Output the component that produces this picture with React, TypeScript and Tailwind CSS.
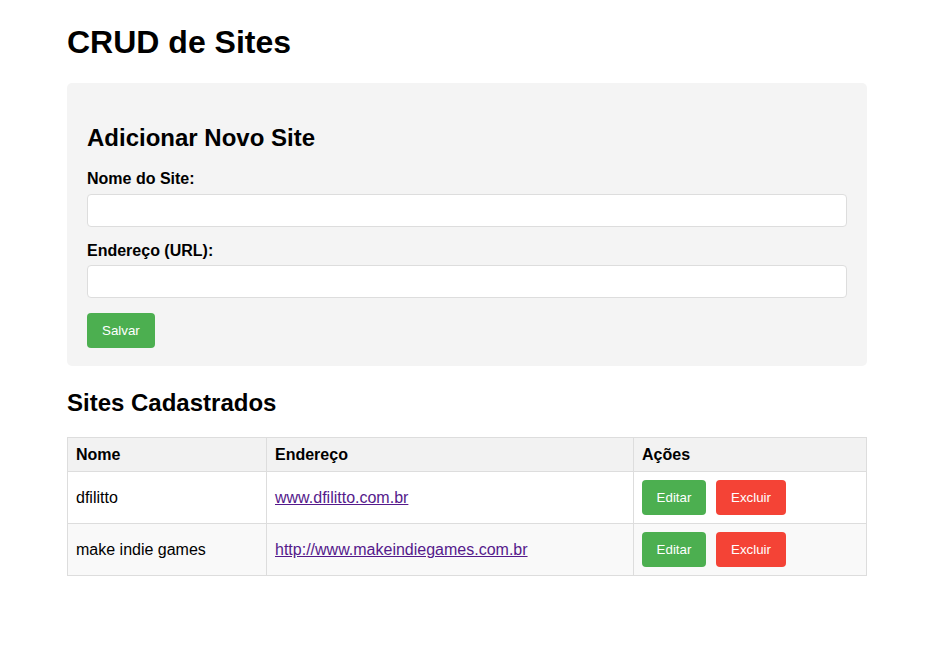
import React from "react"

const sites = [
  { nome: "dfilitto", url: "www.dfilitto.com.br" },
  { nome: "make indie games", url: "http://www.makeindiegames.com.br" },
]

function Field({ label }: { label: string }) {
  return (
    <div className="mb-[15px]">
      <label className="mb-[5px] block text-[16px] font-bold leading-[18.4px]">{label}</label>
      <input
        type="text"
        className="block h-[33px] w-full rounded-[4px] border border-[#ddd] bg-white px-[8px] text-[13.33px] outline-none"
      />
    </div>
  )
}

export default function App() {
  return (
    <div className="min-h-screen bg-white font-['Liberation_Sans',Arial,sans-serif] text-black">
      <div className="ml-[67px] w-[800px] pt-[24px]">
        <h1 className="mb-[22px] text-[32px] font-bold leading-[36.8px]">CRUD de Sites</h1>

        <div className="rounded-[5px] bg-[#f4f4f4] px-[20px] pt-[20px] pb-[18px]">
          <h2 className="mt-[21px] mb-[19px] text-[24px] font-bold leading-[27.6px]">Adicionar Novo Site</h2>
          <Field label="Nome do Site:" />
          <Field label="Endereço (URL):" />
          <button className="h-[35px] rounded-[4px] bg-[#4caf50] px-[15px] text-[13.33px] text-white">
            Salvar
          </button>
        </div>

        <h2 className="mt-[23px] mb-[20px] text-[24px] font-bold leading-[27.6px]">Sites Cadastrados</h2>

        <table className="w-[800px] table-fixed border-collapse text-[16px] leading-[18.4px]">
          <thead>
            <tr className="bg-[#f2f2f2]">
              <th className="w-[199px] border border-[#ddd] px-[8px] pt-[8px] pb-[7px] text-left font-bold">Nome</th>
              <th className="w-[367px] border border-[#ddd] px-[8px] pt-[8px] pb-[7px] text-left font-bold">Endereço</th>
              <th className="border border-[#ddd] px-[8px] pt-[8px] pb-[7px] text-left font-bold">Ações</th>
            </tr>
          </thead>
          <tbody>
            {sites.map((s, i) => (
              <tr key={s.nome} className={i % 2 === 1 ? "bg-[#f9f9f9]" : "bg-white"}>
                <td className="border border-[#ddd] p-[8px]">{s.nome}</td>
                <td className="border border-[#ddd] p-[8px]">
                  <a href="#" className="text-[#551a8b] underline">{s.url}</a>
                </td>
                <td className="border border-[#ddd] p-[8px]">
                  <div className="flex gap-[10px]">
                    <button className="h-[35px] w-[64px] rounded-[4px] bg-[#4caf50] text-[13.33px] text-white">
                      Editar
                    </button>
                    <button className="h-[35px] w-[70px] rounded-[4px] bg-[#f44336] text-[13.33px] text-white">
                      Excluir
                    </button>
                  </div>
                </td>
              </tr>
            ))}
          </tbody>
        </table>
      </div>
    </div>
  )
}
